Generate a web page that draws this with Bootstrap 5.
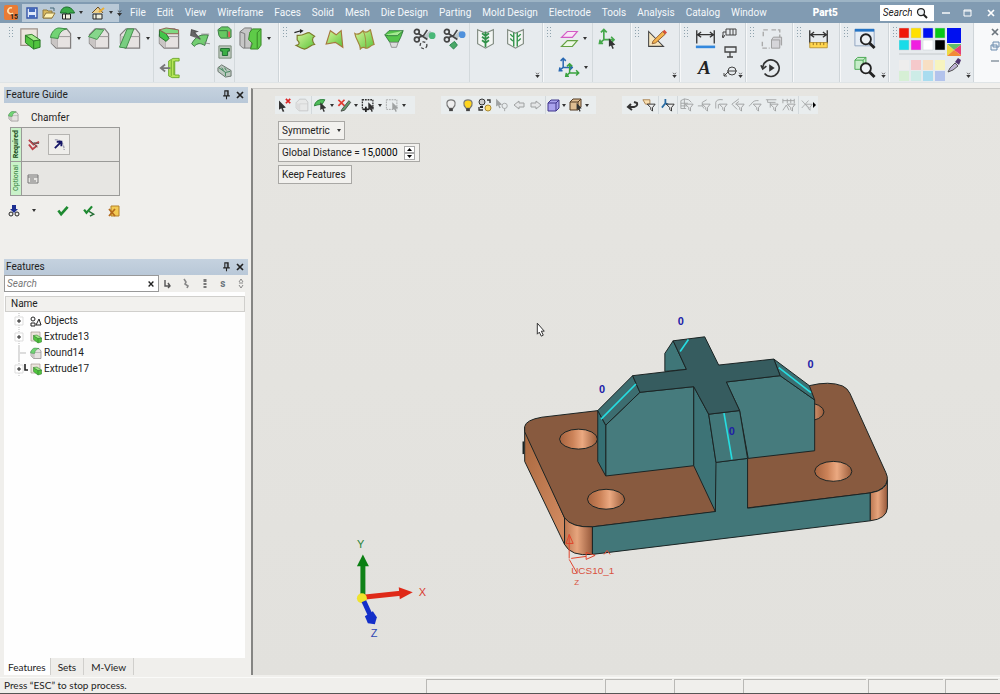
<!DOCTYPE html>
<html lang="en">
<head>
<meta charset="utf-8">
<meta name="viewport" content="width=device-width, initial-scale=1">
<title>Part5</title>
<link href="https://cdn.jsdelivr.net/npm/bootstrap@5.3.0/dist/css/bootstrap.min.css" rel="stylesheet">
<style>
body{font-family:Roboto,"Liberation Sans",sans-serif;font-size:10px;line-height:14px;color:#222;background:#f0efec}
svg{display:block;flex:none}
button,.form-control{font:inherit;color:inherit}
.tool{border:0;background:none;padding:0;display:flex;align-items:center;justify-content:center;flex:none}
.drop::after{content:"";border:2px solid transparent;border-top:3px solid #333;border-bottom:0;margin-left:4px}
.titlebar{background:#819bb2;height:23px;border-top:2px solid #9db4c5;color:#fff}
.logo{width:14px;height:15px}
.quick{background:#b9c9d7;height:18px;width:97px}
.menu{gap:11px;margin-left:11px}
.menu a{color:#f4f8fb;text-decoration:none;white-space:nowrap}
.doc{font-weight:900;margin-left:46px}
.find{width:54px;height:16px;margin-left:42px;color:#222}
.find input{width:32px;padding:0 0 0 3px;border:0;background:none;font-style:italic}
.find input::placeholder{color:#222;opacity:1}
.ribbon{background:#e7ebee;height:60px;padding-left:5px;border-bottom:1px solid #dfe4e6}
.bundle{border-right:1px solid #cfd5d9;box-shadow:1px 0 #f7f8f9;position:relative;padding-left:10px}
.bundle::before{content:"";position:absolute;left:3px;top:3px;width:6px;height:11px;background:radial-gradient(circle,#8fa3ae 1px,transparent 1px) 0 0/3px 3px}
.pile{width:30px;display:flex;flex-direction:column;flex:none}
.pile .tool{height:29px;margin-top:1px}
.pile .tool + .tool{margin-top:0}
.wide{width:39px}
.slim{width:19px}
.slim .tool,.slim .tool + .tool{height:19px;margin-top:0}
.rule{width:1px;background:#d3d9dc}
.more{position:absolute;right:2px;bottom:4px}
.g1{width:274px}.g2{width:264px}.g3{width:88px}.g4{width:49px}.g5{width:66px}.g6{width:47px}.g7{width:47px}.g8{width:49px}.g9{width:85px}
.side{width:244px;margin-left:4px;margin-right:3px}
.panel-title{background:linear-gradient(#c5d2df,#b9c8d8);height:16px;padding:0 3px 0 2px}
.guide{height:172px}
.steps{width:110px;margin:2px 0 0 6px;border-collapse:collapse}
.steps td,.steps th{border:1px solid #9a9a98;height:34px;padding:0}
.steps th{width:11px;background:#c9f2c9;font-size:7px;line-height:9px;font-weight:400;color:#2d7a35}
.steps tr:first-child th{font-weight:700;color:#174b17}
.steps th span{writing-mode:vertical-rl;transform:rotate(180deg);display:block;margin:auto}
.steps td{background:#e7e6e3}
.steps td .tool{width:22px;height:21px}
.on{border:1px solid #b5b4b1!important;background:#efeeeb!important}
.filter{width:155px;height:17px;border:1px solid #999;background:#fff}
.filter input{border:0;background:none;font-style:italic;padding:0 2px;width:138px}
.filter input::placeholder{color:#777;opacity:1}
.tree{background:#fefefe;margin-right:3px}
.head{background:#f2f1ee;border:1px solid #d0cfcc;height:16px;padding-left:5px;margin:4px 0 0 1px}
.tree li{height:16px;gap:2px;line-height:16px}
.tree ul{padding:1px 0 0 8px}
.expand{width:16px}
.tabs button{border:0;border-right:1px solid #d0cfcc;background:#eeedea;height:17px;padding:0 7px;white-space:nowrap}
.tabs .active{background:#fefefe;padding:0 4px}
.tabs,.status{font-family:Lato,sans-serif}
.view{background:linear-gradient(#e6e5e1,#e2e1dd);border-left:2px solid #858583;border-top:1px solid #c9c8c5;margin-top:1px}
.model{z-index:0}
.over{z-index:1}
.strip{background:#e9edee;height:18px;gap:1px;padding:0 2px}
.strip .tool{height:18px;min-width:16px}
.strip .drop::after{margin-left:2px;margin-right:2px}
.s1{width:140px;margin:7px 26px 0 22px}.s2{width:155px;margin:7px 26px 0 0}.s3{width:196px;margin-top:7px}
.faded{opacity:.4}
.opts{margin:7px 0 0 25px;gap:3px}
.opt{border:1px solid #a9a8a5;background:#f2f1ee;height:19px;padding:0 5px 0 3px;display:flex;align-items:center;white-space:nowrap}
.opt.drop{padding-right:3px}
.opt.drop::after{margin-left:7px}
.opt input{border:0;background:none;width:38px;padding:0;margin-left:2px}
.spin{border:1px solid #aaa;width:11px;height:7px;padding:0;background:#fff;display:flex;align-items:center;justify-content:center}
.status{height:17px;margin-top:2px;border-bottom:1px solid #555;border-top:1px solid #fafaf8}
.cellbar{border:1px solid #b9b8b5;border-width:1px 0 0 1px;margin-right:2px;margin-top:1px;flex:none}
.w1{width:177px}.w2{width:67px}.w3{width:123px}.w4{width:75px}.w5{width:53px}
.canvas-text{font-family:"Liberation Sans",sans-serif}
</style>
<script src="https://cdn.jsdelivr.net/npm/bootstrap@5.3.0/dist/js/bootstrap.bundle.min.js"></script>
</head>
<body class="vh-100 d-flex flex-column overflow-hidden">

<svg width="0" height="0" class="position-absolute" aria-hidden="true">
<defs>
<linearGradient id="gr" x1="0" y1="0" x2="1" y2="1"><stop offset="0" stop-color="#d6f59a"/><stop offset="1" stop-color="#5cc43c"/></linearGradient>
<linearGradient id="hole"><stop offset="0" stop-color="#a5633f"/><stop offset=".35" stop-color="#cc8359"/><stop offset=".6" stop-color="#eba981"/><stop offset="1" stop-color="#9a5c3a"/></linearGradient>
<linearGradient id="corner"><stop offset="0" stop-color="#bb7650"/><stop offset=".45" stop-color="#e7a57d"/><stop offset="1" stop-color="#96583a"/></linearGradient>
<linearGradient id="lside" x1="0" y1="0" x2="1" y2="1"><stop offset="0" stop-color="#a9683f"/><stop offset="1" stop-color="#d58d63"/></linearGradient>
<symbol id="cube" viewBox="0 0 24 24"><path d="M2 8 8 2h10l4 5v15H7l-5-5z" fill="#e6e2e1" stroke="#827f7f" stroke-width="1.3"/><path d="M8 10h14M8 10v12" fill="none" stroke="#9a9696"/><path d="m2 9 6 1v12l-6-5z" fill="#c9c5c4"/></symbol>
<symbol id="extrude" viewBox="0 0 24 24"><path d="M2 1h18v18H2z" fill="#ece5dd" stroke="#9d928a" stroke-width="1.3"/><path d="m7 8 9 6 7-1v8l-7 2-9-7z" fill="#51c43f" stroke="#267523"/><path d="m7 8 7-1 9 6-7 1z" fill="#a2ea88" stroke="#267523"/><path d="M16 14v9" stroke="#267523"/></symbol>
<symbol id="round" viewBox="0 0 24 24"><use href="#cube"/><path d="M1 11C2 5 6 1 10 1l8 1c-5 1-8 4-9 10z" fill="#72d475" stroke="#3d8f46"/></symbol>
<symbol id="cham" viewBox="0 0 24 24"><use href="#cube"/><path d="m1 10 8-8 8 1-7 10z" fill="#86d68b" stroke="#479651"/></symbol>
<symbol id="draft" viewBox="0 0 24 24"><use href="#cube"/><path d="M1 21 9 2h7L8 22z" fill="#78ce80" stroke="#3f8d48"/></symbol>
<symbol id="cut" viewBox="0 0 24 24"><use href="#cube"/><path d="m2 3 7 4 3 5-3 3-7-5z" fill="#42c54a" stroke="#24672a"/><path d="m2 3 7-2 13 2v4H9z" fill="#7ed980" stroke="#915f50"/></symbol>
<symbol id="push" viewBox="0 0 24 24"><path d="M3 18C8 9 14 7 22 8l-4 12c-5-3-8-3-12 1z" fill="#73ce72" stroke="#326f3b"/><path d="M14 7h9M17 17l7 1" stroke="#888"/><path d="m2 9 1-7 6 2-3 1 7 8" fill="#666" stroke="#555" stroke-width="1.5"/></symbol>
<symbol id="offset" viewBox="0 0 24 24"><path d="m11 4 5-3h7v3h-5v16h5v3h-8l-4-2z" fill="#b6e659" stroke="#65a527"/><path d="M17 4v16M14 3v18" stroke="#65a527"/><path d="M13 12H3m4-4-5 4 5 4" fill="none" stroke="#777" stroke-width="2"/></symbol>
<symbol id="boxg" viewBox="0 0 16 16"><path d="m1 5 4-3h7l3 3v8l-2 1H4l-2-3z" fill="#66c862" stroke="#3a7742"/><path d="M2 6h9v7" fill="none" stroke="#3a7742"/><path d="M13 7v6" stroke="#e25a5a" stroke-width="2"/></symbol>
<symbol id="pocket" viewBox="0 0 16 16"><path d="M1 1h14v14H1z" fill="#bcc9bc" stroke="#708270"/><path d="M3 4h10v3h-2v5H5V7H3z" fill="#3cae44" stroke="#17642c"/></symbol>
<symbol id="slab" viewBox="0 0 16 16"><path d="m1 5 4-3 10 6v6l-6 1-8-6z" fill="#bbc8bf" stroke="#647069"/><path d="m5 5 2 3m1-3 2 3M2 5l7 5 5-1M9 10v4" fill="none" stroke="#3a8255"/></symbol>
<symbol id="divide" viewBox="0 0 24 24"><path d="m1 5 5-4h7l-1 7 2 5-2 9H4l-3-3z" fill="#c6c6c6" stroke="#777"/><path d="m1 5 5 2v15" fill="none" stroke="#777"/><path d="M11 6 14 2h9v17l-3 4h-8l2-6-4-4 1-6z" fill="#5ecb48" stroke="#368527"/><path d="m19 6 4-4m-4 4v16" stroke="#368527"/></symbol>
<symbol id="sweepf" viewBox="0 0 24 24"><path d="M4 8c7 1 9-3 13-3l6 4c-3 2-3 5 0 9-4 0-6 4-11 5-5-1-7-3-9-4 4-1 4-3 1-6z" fill="url(#gr)" stroke="#7c7a2a" stroke-width="1.3"/><path d="m1 5 7-2" stroke="#222" stroke-width="1.4"/><path d="m7 1 4 2-4 3z" fill="#222"/></symbol>
<symbol id="planef" viewBox="0 0 24 24"><path d="m2 18 5-16 7 5 6-5 2 20-9-6z" fill="url(#gr)" stroke="#a5793e" stroke-width="1.4"/></symbol>
<symbol id="patch" viewBox="0 0 24 24"><path d="M2 6c3 2 6 0 9-3 3 4 6 0 8-1l4 16c-5 1-6 5-9 4-4-2-5 0-6 1C8 17 3 13 2 6z" fill="url(#gr)" stroke="#a2843c" stroke-width="1.3"/><path d="M11 3c3 6 3 12 3 19" fill="none" stroke="#a2843c"/></symbol>
<symbol id="skirt" viewBox="0 0 24 24"><path d="m1 7 5-5h17l-3 8-3 6H7z" fill="#55c54b" stroke="#287135"/><path d="m1 7 4 1h11l7-6" fill="#a4e991" stroke="#287135"/><path d="m7 16 2 6h6l2-6z" fill="#ddd" stroke="#888"/></symbol>
<symbol id="scis" viewBox="0 0 24 24"><path d="m13 11 6-6" stroke="#b9c4c8" stroke-width="4"/><g fill="none" stroke="#454545" stroke-width="1.8"><circle cx="4" cy="5" r="2.500"/><circle cx="4" cy="13" r="2.500"/><path d="m6 7 9 6M6 11l5-2 4-6"/></g></symbol>
<symbol id="trim" viewBox="0 0 24 24"><use href="#scis"/><circle cx="20" cy="9" r="3.500" fill="#4ab878"/><circle cx="11" cy="19" r="3.500" fill="none" stroke="#444" stroke-dasharray="3 2" stroke-width="1.400"/></symbol>
<symbol id="splitf" viewBox="0 0 24 24"><use href="#scis"/><circle cx="20" cy="8" r="3.500" fill="#4f91dc"/><path d="m7 19 5-4 3 4-4 4z" fill="#49a867" stroke="#24834a"/></symbol>
<symbol id="page" viewBox="0 0 24 24"><path d="m3 2 9 4 9-4v16l-9 5-9-5z" fill="#f3f6f3" stroke="#818b81" stroke-width="1.3"/></symbol>
<symbol id="mold1" viewBox="0 0 24 24"><use href="#page"/><path d="M12 4v18M8 6l4 3 4-3M8 10l4 3 4-3M8 14l4 3 4-3" fill="none" stroke="#32924a" stroke-width="2"/></symbol>
<symbol id="mold2" viewBox="0 0 24 24"><use href="#page"/><path d="M10 5v16M14 5v16M6 7l3 3m-3 2 3 3m9-8-3 3m3 2-3 3" fill="none" stroke="#32924a" stroke-width="1.600"/></symbol>
<symbol id="planes" viewBox="0 0 24 24"><path d="M10 3h12l-6 7H3z" fill="#fae5f7" stroke="#d35bc5" stroke-width="1.4"/><path d="M10 14h12l-6 7H3z" fill="#edf8e5" stroke="#64a143" stroke-width="1.4"/></symbol>
<symbol id="axes" viewBox="0 0 24 24"><path d="M8 16V2M4 6l4-4 4 4M8 16h14m-4-4 4 4-4 4M8 16l-6 5m1-5-1 5h5" fill="none" stroke="currentColor" stroke-width="2.300"/></symbol>
<symbol id="cur" viewBox="0 0 12 16"><path d="m1 1 9 9-4 1 2 4-2 1-2-5-3 2z" fill="#333"/></symbol>
<symbol id="sketch" viewBox="0 0 24 24"><path d="M3 4v17h17z" fill="#f6e5bd" stroke="#444" stroke-width="1.200"/><path d="M8 15 19 4l3 3L11 17l-4 1z" fill="#f4b44e" stroke="#8b562c"/><path d="m19 4 2-2 3 3-2 2z" fill="#d64f3c"/></symbol>
<symbol id="dim" viewBox="0 0 24 24"><path d="M2 2v15M22 2v15M3 7h18M7 4 3 7l4 3M17 4l4 3-4 3" fill="none" stroke="#333" stroke-width="1.500"/></symbol>
<symbol id="mag" viewBox="0 0 24 24"><circle cx="10" cy="10" r="7" fill="#eef2f5" stroke="currentColor" stroke-width="2.500"/><path d="m15 15 7 7" stroke="currentColor" stroke-width="4"/></symbol>
<symbol id="clock" viewBox="0 0 24 24"><path d="M3 11a9 9 0 1 1 2 7M1 9l2 4 4-3" fill="none" stroke="#333" stroke-width="1.800"/><path d="m10 8 6 4-6 4z" fill="#333"/></symbol>
<symbol id="ghost" viewBox="0 0 24 24"><path d="M3 9V2h5M12 2h9v9M2 15v7h8" fill="none" stroke="#aaa" stroke-width="1.500" stroke-dasharray="5 2"/><path d="M12 13h9v9h-9zM12 13l2-3h9v9" fill="#d5d5d9" stroke="#999"/></symbol>
<symbol id="pin" viewBox="0 0 10 12"><path d="M3 1h4v6H3zM1 7h8M5 7v4" fill="none" stroke="#222" stroke-width="1.300"/><path d="M6 1v6" stroke="#222"/></symbol>
<symbol id="x" viewBox="0 0 10 10"><path d="m2 2 6 6M8 2 2 8" stroke="currentColor" stroke-width="1.700"/></symbol>
<symbol id="check" viewBox="0 0 14 14"><path d="m2 7 3 4 7-8" fill="none" stroke="#1e8a31" stroke-width="2.800"/></symbol>
<symbol id="chev" viewBox="0 0 6 8"><path d="m1 1 2 2 2-2" fill="none" stroke="#333"/><path d="M0 4h6L3 8z" fill="#333"/></symbol>
<symbol id="plus" viewBox="0 0 16 16"><path d="M7 0v16" stroke="#bbb" stroke-dasharray="1 1"/><path d="M3 4h8v8H3z" fill="#fff" stroke="#ddd"/><path d="M5 8h4M7 6v4" stroke="#222"/></symbol>
<symbol id="funnel" viewBox="0 0 16 16"><path d="M6 7h9l-3 4v4l-2-2v-2z" fill="#eee" stroke="currentColor"/></symbol>
<symbol id="bulb" viewBox="0 0 14 16"><path d="M5 11C1 7 2 2 7 2s6 5 2 9z" stroke="#777" stroke-width="1.200"/><path d="M5 11h4v3H5z" fill="#444"/></symbol>
</defs>
</svg>

<header class="titlebar d-flex align-items-center flex-shrink-0 ps-1">
<svg class="logo" viewBox="0 0 14 15"><rect width="14" height="15" rx="2" fill="#e87b35"/><path d="M8 3a3 3 0 1 0 1 5" fill="none" stroke="#ffe0b0" stroke-width="1.600"/><text x="6" y="14" font-size="7" font-weight="700" fill="#222">15</text></svg>
<div class="quick d-flex align-items-center ms-1 px-1 gap-1">
<button class="tool" title="Save"><svg width="12" height="12" viewBox="0 0 12 12"><path d="M1 1h10v10H1z" fill="#dfe9fa" stroke="#3454a8" stroke-width="1.400"/><path d="M3 1h6v4H3zM3 8h6v3H3z" fill="#4469bd"/></svg></button>
<button class="tool" title="Open"><svg width="14" height="12" viewBox="0 0 14 12"><path d="M1 3h4l1 1h4v7H1z" fill="#d9b95e" stroke="#8f7840"/><path d="m1 11 3-5h9l-3 5z" fill="#fff2b3" stroke="#8f7840"/><path d="M8 1h4v3" fill="none" stroke="#467"/></svg></button>
<button class="tool drop" title="Import"><svg width="15" height="14" viewBox="0 0 14 14"><path d="M0 7c1-8 11-8 14 0H9v2H6V7z" fill="#3aaa48" stroke="#166b28"/><path d="M2 8h8v5H2zM5 8v5" fill="#eed" stroke="#222"/></svg></button>
<button class="tool drop ms-1" title="Export"><svg width="14" height="14" viewBox="0 0 14 14"><path d="m1 7 6-6 5 6" fill="#edd18d" stroke="#684b25"/><path d="M2 8h9v5H2zM5 8v5" fill="#eed" stroke="#222"/><path d="m8 6 5-4" stroke="#eaae36" stroke-width="2"/></svg></button>
<button class="tool" title="Customize"><svg width="5" height="8"><use href="#chev"/></svg></button>
</div>
<nav class="menu d-flex" aria-label="Main menu">
<a href="#">File</a><a href="#">Edit</a><a href="#">View</a><a href="#">Wireframe</a><a href="#">Faces</a><a href="#">Solid</a><a href="#">Mesh</a><a href="#">Die Design</a><a href="#">Parting</a><a href="#">Mold Design</a><a href="#">Electrode</a><a href="#">Tools</a><a href="#">Analysis</a><a href="#">Catalog</a><a href="#">Window</a>
</nav>
<div class="doc">Part5</div>
<label class="find bg-white d-flex align-items-center"><input type="text" placeholder="Search" aria-label="Search commands"><svg width="12" height="12" class="ms-1"><use href="#mag"/></svg></label>
<div class="d-flex justify-content-between flex-grow-1 ps-2 pe-1">
<button class="tool text-white" title="Minimize"><svg width="8" height="8"><path d="M0 4h8" stroke="#fff" stroke-width="1.400"/></svg></button>
<button class="tool text-white" title="Maximize"><svg width="9" height="8"><path d="M1 1h7v6H1zM1 2h7" fill="none" stroke="#fff"/></svg></button>
<button class="tool text-white" title="Close"><svg width="10" height="10"><use href="#x"/></svg></button>
</div>
</header>

<div class="ribbon d-flex flex-shrink-0" role="toolbar" aria-label="Features">
<div class="bundle g1 d-flex">
<div class="pile"><button class="tool" title="Extrude"><svg width="22" height="22"><use href="#extrude"/></svg></button></div>
<div class="pile wide"><button class="tool drop" title="Round"><svg width="24" height="23"><use href="#round"/></svg></button></div>
<div class="pile"><button class="tool" title="Chamfer"><svg width="24" height="23"><use href="#cham"/></svg></button></div>
<div class="pile wide"><button class="tool drop" title="Draft"><svg width="24" height="23"><use href="#draft"/></svg></button></div>
<div class="rule"></div>
<div class="pile"><button class="tool" title="Cut"><svg width="24" height="23"><use href="#cut"/></svg></button><button class="tool" title="Offset"><svg width="21" height="22"><use href="#offset"/></svg></button></div>
<div class="pile"><button class="tool" title="Push"><svg width="21" height="21"><use href="#push"/></svg></button></div>
<div class="rule"></div>
<div class="pile slim"><button class="tool" title="Box"><svg width="15" height="15"><use href="#boxg"/></svg></button><button class="tool" title="Pocket"><svg width="14" height="14"><use href="#pocket"/></svg></button><button class="tool" title="Slab"><svg width="15" height="15"><use href="#slab"/></svg></button></div>
<div class="rule"></div>
<div class="pile wide"><button class="tool drop" title="Divide"><svg width="25" height="23"><use href="#divide"/></svg></button></div>
</div>
<div class="bundle g2 d-flex">
<div class="pile"><button class="tool" title="Sweep face"><svg width="23" height="22"><use href="#sweepf"/></svg></button></div>
<div class="pile"><button class="tool" title="Plane face"><svg width="21" height="20"><use href="#planef"/></svg></button></div>
<div class="pile"><button class="tool" title="Patch"><svg width="22" height="22"><use href="#patch"/></svg></button></div>
<div class="pile"><button class="tool" title="Skirt"><svg width="20" height="20"><use href="#skirt"/></svg></button></div>
<div class="pile"><button class="tool" title="Trim"><svg width="23" height="23"><use href="#trim"/></svg></button></div>
<div class="pile"><button class="tool" title="Split"><svg width="23" height="23"><use href="#splitf"/></svg></button></div>
<div class="rule"></div>
<div class="pile"><button class="tool" title="Mold core"><svg width="21" height="21"><use href="#mold1"/></svg></button></div>
<div class="pile"><button class="tool" title="Mold split"><svg width="21" height="21"><use href="#mold2"/></svg></button></div>
<svg class="more" width="5" height="6"><use href="#chev"/></svg>
</div>
<div class="bundle g3 d-flex">
<div class="pile wide"><button class="tool drop" title="Planes"><svg width="20" height="20"><use href="#planes"/></svg></button><button class="tool drop" title="Coordinate systems"><svg width="22" height="22" viewBox="0 0 24 24"><g color="#2868b2"><use href="#axes" width="17" height="17"/></g><g color="#3ba33f"><use href="#axes" x="7" y="6" width="17" height="17"/></g></svg></button></div>
<div class="rule"></div>
<div class="pile"><button class="tool" title="Activate system"><svg width="21" height="23" viewBox="0 0 24 24"><g color="#46a84b"><use href="#axes" width="20" height="20"/></g><use href="#cur" x="11" y="11" width="11" height="13"/></svg></button></div>
</div>
<div class="bundle g4 d-flex"><div class="pile"><button class="tool" title="Sketch"><svg width="21" height="21"><use href="#sketch"/></svg></button></div><svg class="more" width="5" height="6"><use href="#chev"/></svg></div>
<div class="bundle g5 d-flex">
<div class="pile"><button class="tool" title="Dimension"><svg width="21" height="22" viewBox="0 0 24 24"><use href="#dim"/><path d="M1 21h22" stroke="#3388dd" stroke-width="3"/></svg></button><button class="tool" title="Text"><svg width="20" height="22"><text x="3" y="17" font-family="Liberation Serif" font-size="19" font-weight="700" font-style="italic" fill="#222">A</text></svg></button></div>
<div class="pile slim"><button class="tool" title="Label"><svg width="15" height="14" viewBox="0 0 15 14"><path d="M4 3h10v6H4zM8 3v6m3-6v6M4 6H1v5M0 9l1 3 2-3" fill="none" stroke="#444"/></svg></button><button class="tool" title="Datum"><svg width="14" height="14" viewBox="0 0 14 14"><path d="M2 2h11v5H2zM7 7v5M4 12h6" fill="none" stroke="#444" stroke-width="1.300"/></svg></button><button class="tool" title="Balloon"><svg width="14" height="14" viewBox="0 0 14 14"><circle cx="9" cy="7" r="4" fill="none" stroke="#444"/><path d="M4 7h10M5 8l-4 4m0-3v3h3" fill="none" stroke="#444"/></svg></button></div>
<svg class="more" width="5" height="6"><use href="#chev"/></svg>
</div>
<div class="bundle g6 d-flex"><div class="pile"><button class="tool" title="Rebuild"><svg width="23" height="22"><use href="#ghost"/></svg></button><button class="tool" title="History"><svg width="22" height="22"><use href="#clock"/></svg></button></div></div>
<div class="bundle g7 d-flex"><div class="pile"><button class="tool" title="Measure"><svg width="21" height="22" viewBox="0 0 24 24"><use href="#dim"/><path d="M2 16h20v6H2z" fill="#ffd64f" stroke="#b69132"/><path d="M6 16v3m4-3v3m4-3v3m4-3v3" stroke="#8b651c"/></svg></button></div></div>
<div class="bundle g8 d-flex"><div class="pile"><button class="tool" title="Zoom window"><svg width="22" height="23" viewBox="0 0 24 24"><path d="M1 2h21v18H1z" fill="#e6edf5" stroke="#8ba0bc"/><path d="M1 3h21" stroke="#2474c5" stroke-width="3"/><use href="#mag" x="5" y="5" width="19" height="19"/></svg></button><button class="tool" title="Zoom selection"><svg width="22" height="23" viewBox="0 0 24 24"><path d="m1 4 3-3h9v10l-3 3H1zM1 4h9v10m0-10 3-3" fill="#c6edca" stroke="#43a44b"/><use href="#mag" x="5" y="5" width="19" height="19"/></svg></button></div><svg class="more" width="5" height="6"><use href="#chev"/></svg></div>
<div class="bundle g9 d-flex">
<svg width="62" height="56" viewBox="0 0 62 56" role="img" aria-label="Colour palette" class="mt-1">
<g stroke="#c5ccd0" stroke-width=".5"><path d="M0 1h10v10H0z" fill="#f01808"/><path d="M12 1h10v10H12z" fill="#ffe000"/><path d="M24 1h10v10H24z" fill="#0010f0"/><path d="M36 1h10v10H36z" fill="#08c818"/><path d="M0 13h10v10H0z" fill="#18dce8"/><path d="M12 13h10v10H12z" fill="#f020e0"/><path d="M24 13h10v10H24z" fill="#fff"/><path d="M36 13h10v10H36z" fill="#000"/></g>
<path d="M48 1h15v15H48z" fill="#0010f0"/><path d="M0 27h46" stroke="#c4c9cb"/>
<path d="M0 33h10v10H0z" fill="#eeeded"/><path d="M12 33h10v10H12z" fill="#f5c9cb"/><path d="M24 33h10v10H24z" fill="#f8dfc3"/><path d="M36 33h10v10H36z" fill="#f7f4bf"/><path d="M0 44h10v10H0z" fill="#d6efd5"/><path d="M12 44h10v10H12z" fill="#cdece7"/><path d="M24 44h10v10H24z" fill="#a9dcef"/><path d="M36 44h10v10H36z" fill="#b3c3ec"/>
<path d="M48 17h15L55 23z" fill="#61bd68"/><path d="M63 17v12l-8-6z" fill="#e63f77"/><path d="M48 17v12l7-6z" fill="#edda41"/><path d="M48 29h15l-8-6z" fill="#f28a37"/><path d="m49 45 2-4 5-5 3 3-5 4z" fill="#bbb0d2" stroke="#555"/><path d="m56 35 3-4 3 2-2 5z" fill="#513671"/></svg>
<svg class="more" width="5" height="6"><use href="#chev"/></svg>
</div>
<div class="d-flex flex-column align-items-center flex-grow-1 bg-light gap-1 ps-3 pt-1">
<button class="tool text-secondary" title="Close part"><svg width="10" height="10"><use href="#x"/></svg></button>
<button class="tool" title="Restore part"><svg width="10" height="10"><path d="M3 1h6v5H3zM1 4h6v5H1z" fill="#eef3f8" stroke="#6c8cad"/></svg></button>
<button class="tool" title="Minimize part"><svg width="9" height="10"><path d="M0 6h8" stroke="#567"/></svg></button>
</div>
</div>

<main class="d-flex flex-grow-1 pt-1 overflow-hidden">
<aside class="side d-flex flex-column flex-shrink-0">
<section class="guide flex-shrink-0">
<div class="panel-title d-flex align-items-center"><span class="flex-grow-1">Feature Guide</span><button class="tool me-1" title="Pin"><svg width="9" height="10"><use href="#pin"/></svg></button><button class="tool" title="Close"><svg width="10" height="10"><use href="#x"/></svg></button></div>
<div class="d-flex align-items-center gap-2 ms-1 mt-1"><svg width="11" height="11"><use href="#round"/></svg><span class="ms-1 pt-1">Chamfer</span></div>
<table class="steps">
<tr><th scope="row"><span>Required</span></th><td><div class="d-flex ps-1"><button class="tool pe-2" title="Edges"><svg width="13" height="13" viewBox="0 0 14 14"><path d="m2 2 5 5 6-3M2 7l4 5 5-4" fill="none" stroke="#bb4248" stroke-width="2"/><path d="m4 3 7 7M7 5l6 1" stroke="#555"/></svg></button><button class="tool on" title="Curve"><svg width="13" height="13" viewBox="0 0 14 14"><path d="M2 2c6-1 10 4 10 11" fill="none" stroke="#99a" stroke-width="1.300" stroke-dasharray="3 1"/><path d="m2 11 6-6M4 4h5v5" fill="none" stroke="#151567" stroke-width="2"/></svg></button></div></td></tr>
<tr><th scope="row"><span>Optional</span></th><td><div class="d-flex ps-1"><button class="tool pe-2" title="Settings"><svg width="12" height="10"><path d="M1 1h10v8H1zM1 3h10M3 5h4M3 7h6" fill="none" stroke="#777"/></svg></button></div></td></tr>
</table>
<div class="d-flex align-items-center mt-2 ms-1">
<button class="tool" title="Preview"><svg width="12" height="13" viewBox="0 0 12 13"><path d="M4 1h4v4h2L6 9 2 5h2z" fill="#1c2e91"/><circle cx="3" cy="10" r="2" fill="none" stroke="#222"/><circle cx="9" cy="10" r="2" fill="none" stroke="#222"/></svg></button>
<button class="tool drop me-3 ms-2" title="Preview options"></button>
<button class="tool ms-1 me-2" title="OK"><svg width="14" height="13"><use href="#check"/></svg></button>
<button class="tool ms-1 me-2" title="Apply"><svg width="14" height="13" viewBox="0 0 14 14"><use href="#check" width="12" height="12"/><path d="m7 8 5 3-4 2" fill="none" stroke="#236e34" stroke-width="1.500"/></svg></button>
<button class="tool ms-1" title="Cancel"><svg width="12" height="12"><path d="M3 1h8v10H3z" fill="#f3cb55" stroke="#b4812b"/><path d="m1 4 6 7M7 4l-6 7" stroke="#b56b1d" stroke-width="1.800"/></svg></button>
</div>
</section>
<section class="flex-grow-1 d-flex flex-column">
<div class="panel-title d-flex align-items-center flex-shrink-0"><span class="flex-grow-1">Features</span><button class="tool me-1" title="Pin"><svg width="9" height="10"><use href="#pin"/></svg></button><button class="tool" title="Close"><svg width="10" height="10"><use href="#x"/></svg></button></div>
<div class="d-flex align-items-center">
<label class="filter d-flex align-items-center"><input type="text" placeholder="Search" aria-label="Search features"><svg width="8" height="8" class="ms-1"><use href="#x"/></svg></label>
<div class="d-flex justify-content-between flex-grow-1 ps-1 pe-1 text-secondary">
<button class="tool" title="Child"><svg width="8" height="10"><path d="M2 1v6h5M5 4l2 3-2 2" fill="none" stroke="#555" stroke-width="1.400"/></svg></button>
<button class="tool" title="Chain"><svg width="7" height="11"><path d="m1 1 2 3-1 2 3 2-1 2" fill="none" stroke="#888" stroke-width="1.600"/></svg></button>
<button class="tool" title="Problems"><svg width="5" height="11"><path d="M2 1v6m0 1v2" stroke="#777" stroke-width="3" stroke-dasharray="3 1"/></svg></button>
<button class="tool fw-bold" title="Suppressed">s</button>
<button class="tool" title="Sort"><svg width="6" height="11"><path d="M1 4 3 1l2 3M1 7l2 3 2-3M1 5h4" fill="none" stroke="#888"/></svg></button>
</div></div>
<div class="tree flex-grow-1">
<div class="head">Name</div>
<ul class="list-unstyled m-0">
<li class="d-flex align-items-center"><svg class="expand" height="16"><use href="#plus"/></svg><svg width="12" height="11"><g fill="none" stroke="#222"><circle cx="3" cy="3" r="2"/><path d="M1 7h4v3H1zM6 9l3-6 2 6z"/></g></svg>Objects</li>
<li class="d-flex align-items-center"><svg class="expand" height="16"><use href="#plus"/></svg><svg width="12" height="13"><use href="#extrude"/></svg>Extrude13</li>
<li class="d-flex align-items-center"><svg class="expand" height="16"><path d="M7 0v16M8 8h6" stroke="#bbb"/></svg><svg width="12" height="13"><use href="#round"/></svg>Round14</li>
<li class="d-flex align-items-center"><svg class="expand" height="16"><use href="#plus"/><path d="M13 3v6h3" fill="none" stroke="#222" stroke-width="1.600"/></svg><svg width="12" height="13"><use href="#extrude"/></svg>Extrude17</li>
</ul>
</div>
<div class="tabs d-flex flex-shrink-0"><button class="active">Features</button><button>Sets</button><button>M-View</button></div>
</section>
</aside>

<section class="view flex-grow-1 position-relative d-flex flex-column align-items-start">
<svg class="model position-absolute top-0 start-0 w-100 h-100" viewBox="253 88 747 588" role="img" aria-label="Ribbed base plate">
<g transform="translate(510 310) scale(.3333)" stroke="#1b2424" stroke-width="3" stroke-linejoin="round">
<path d="M43 352V455L163 705V625z" fill="url(#lside)"/>
<path d="M39 395v38" stroke-width="5"/>
<path d="M43 366V350Q47 330 95 322L265 302 900 227Q960 212 1000 228 1015 235 1022 250L1130 488Q1144 515 1120 535 1110 545 1083 550L247 652Q185 655 163 625z" fill="#885a3f"/>
<path d="M163 625V705Q182 742 247 735V652Q185 655 163 625z" fill="url(#corner)"/>
<path d="M1083 550Q1135 542 1135 510V595Q1133 628 1083 634z" fill="url(#corner)"/>
<g fill="url(#hole)"><ellipse cx="205" cy="388" rx="57" ry="30"/><ellipse cx="288" cy="569" rx="56" ry="30"/><ellipse cx="972" cy="485" rx="56" ry="30"/><ellipse cx="890" cy="306" rx="54" ry="28"/></g>
<path d="M247 652 617 606V458L714 446V596L1083 550V634L247 735z" fill="#427779"/>
<path d="m465 184V130l25-38 40 86z" fill="#3f7678"/>
<path d="m650 216 162-19 104 73v153L716 446 690 302z" fill="#467b7d"/>
<path d="m793 147 19 50 104 73-16-43z" fill="#3b7073"/>
<path d="m390 247 162-17v238L287 499V346z" fill="#467b7d"/>
<path d="m263 302 24 44v153l-24-44z" fill="#356f73"/>
<path d="m368 197 22 50-103 99-24-44z" fill="#3c6d70"/>
<path d="m552 230 45 83 22 145-2 148-65-138z" fill="#3d7376"/>
<path d="m597 313 93-11 24 144-95 12z" fill="#427779"/>
<path d="m490 92 95-12 42 85 166-18 19 50-162 19 40 86-93 11-45-83-162 17-22-50 162-19z" fill="#365c5f"/>
<path d="M273 328 378 222M643 310l24 139M808 173l97 75M536 88l-25 36" stroke="#26dce0" stroke-width="5"/>
</g>
<g class="canvas-text" font-size="11" font-weight="700" fill="#2020a8"><text x="678" y="325">0</text><text x="599" y="393">0</text><text x="808" y="368">0</text><text x="729" y="435">0</text></g>
<g fill="none" stroke="#e0452c"><path d="M569 559V535m-3 9 3-9 4 9zM571 559l15-2v-4l9 3-9 4v-3M604 555l3-4 3 4M569 560l8 14"/></g>
<g class="canvas-text" fill="#d9513d" font-size="10"><text x="571" y="575">UCS10_1</text><text x="574" y="586" font-size="8">Z</text></g>
<g stroke-width="5"><path d="M362 598v-33" stroke="#108218"/><path d="m356 567 6-12 6 12z" fill="#0a7f13"/><path d="m362 598 38-4" stroke="#df2918"/><path d="m398 588 14 5-13 7z" fill="#df2918"/><circle cx="361" cy="599" r="5" fill="#efe32d"/><path d="m363 602 6 13" stroke="#142fc9"/><path d="m364 617 8-5 4 6-2 7-7-1z" fill="#142fc9"/></g>
<g class="canvas-text" font-size="11"><text x="356" y="549" fill="#29833a">Y</text><text x="418" y="597" fill="#d83a30">X</text><text x="370" y="638" fill="#3047b3">Z</text></g>
<path d="m537 323v11l2-2 2 4 2-1-2-4h3z" fill="#fff" stroke="#333"/>
</svg>
<div class="over d-flex">
<div class="strip s1 d-flex">
<button class="tool" title="Clear selection"><svg width="14" height="14" viewBox="0 0 16 16"><use href="#cur" y="2" width="11" height="14"/><path d="m9 1 5 5m0-5L9 6" stroke="#db2525" stroke-width="2"/></svg></button>
<button class="tool faded" title="Solid"><svg width="14" height="14"><use href="#cube"/></svg></button>
<div class="rule"></div>
<button class="tool drop" title="Pick"><svg width="15" height="14" viewBox="0 0 16 16"><path d="M1 9c1-6 6-8 12-7l-3 5-6 1z" fill="#4fbd5a" stroke="#267a36"/><use href="#cur" x="7" y="4" width="9" height="12"/></svg></button>
<button class="tool drop" title="Filter"><svg width="15" height="14" viewBox="0 0 16 16"><path d="m1 2 7 7m0-7L1 9" stroke="#e23a30" stroke-width="2"/><path d="m5 13 8-10 2 2-7 9-4 1z" fill="#639c68" stroke="#444"/></svg></button>
<button class="tool drop" title="Window pick"><svg width="15" height="14" viewBox="0 0 16 16"><path d="M1 2h12v11H1z" fill="none" stroke="#333" stroke-width="1.500" stroke-dasharray="2 1"/><use href="#cur" x="7" y="4" width="9" height="12"/><path d="M2 13h6m-3-3v6" stroke="#222" stroke-width="2"/></svg></button>
<button class="tool drop" title="Window options"><svg class="faded" width="15" height="14" viewBox="0 0 16 16"><path d="M1 2h12v11H1z" fill="none" stroke="#333" stroke-dasharray="2 1"/><use href="#cur" x="7" y="4" width="9" height="12"/></svg></button>
</div>
<div class="strip s2 d-flex">
<button class="tool" title="Hide"><svg width="14" height="15" fill="#eee"><use href="#bulb"/></svg></button>
<button class="tool" title="Show"><svg width="14" height="15" fill="#ffd51e"><use href="#bulb"/></svg></button>
<button class="tool" title="Swap visibility"><svg width="14" height="14"><circle cx="4" cy="4" r="3" fill="#ccc" stroke="#333"/><circle cx="10" cy="10" r="3" fill="#ffdc66" stroke="#aa8a33"/><path d="M9 2h3v3M1 9v3h4" fill="none" stroke="#333" stroke-width="1.300"/><path d="M2 9h3" stroke="#222" stroke-width="2"/></svg></button>
<button class="tool faded" title="Pick visibility"><svg width="14" height="14" viewBox="0 0 16 16"><use href="#cur" width="10" height="12"/><circle cx="11" cy="9" r="3" fill="none" stroke="#333"/><path d="M11 12v3" stroke="#333"/></svg></button>
<button class="tool faded" title="Previous"><svg width="12" height="12"><path d="m1 6 5-4v2h5v4H6v2z" fill="#ddd" stroke="#333"/></svg></button>
<button class="tool faded" title="Next"><svg width="12" height="12"><path d="m11 6-5-4v2H1v4h5v2z" fill="#ddd" stroke="#333"/></svg></button>
<div class="rule"></div>
<button class="tool drop" title="Shading"><svg width="13" height="13"><path d="m1 4 3-3h8v8l-3 3H1zM1 4h8v8m0-8 3-3" fill="#aaa2ee" stroke="#40368c"/></svg></button>
<button class="tool drop" title="View orientation"><svg width="14" height="14" viewBox="0 0 14 14"><path d="m1 4 3-3h8v8l-3 3H1zM1 4h8v8m0-8 3-3" fill="#dfbd91" stroke="#553c24"/><use href="#cur" x="7" y="4" width="7" height="10"/></svg></button>
</div>
<div class="strip s3 d-flex justify-content-between">
<button class="tool" title="Back"><svg width="13" height="12"><path d="M3 8h5q4-1 3-4L8 3M5 5 2 8l4 3" fill="none" stroke="#333" stroke-width="2"/></svg></button>
<button class="tool" title="Any"><svg width="14" height="14" viewBox="0 0 16 16"><path d="M1 2h8v5H4z" fill="#f9dfb0" stroke="#a57c49"/><use href="#funnel"/></svg></button>
<div class="rule"></div>
<button class="tool" title="Points"><svg width="14" height="14" viewBox="0 0 16 16"><path d="M5 1v5l-4 5m4-5 6 3" fill="none" stroke="#286ba3" stroke-width="2"/><use href="#funnel"/></svg></button>
<div class="rule"></div>
<button class="tool faded" title="Faces"><svg width="14" height="14" viewBox="0 0 16 16"><path d="m1 3 4-2 5 1 3 3M1 3v9h6M1 6h8M1 9h7M5 1v11" fill="none" stroke="#333"/><use href="#funnel"/></svg></button>
<button class="tool faded" title="Edges"><svg width="14" height="14" viewBox="0 0 16 16"><path d="M1 9h5V5l5-3M6 9l2 3" fill="none" stroke="#333"/><use href="#funnel"/></svg></button>
<button class="tool faded" title="Loops"><svg width="14" height="14" viewBox="0 0 16 16"><path d="M2 12V5q1-4 8-3M5 12V7" fill="none" stroke="#333"/><use href="#funnel"/></svg></button>
<button class="tool faded" title="Curves"><svg width="14" height="14" viewBox="0 0 16 16"><path d="M9 1 1 7l6 6M9 4 5 7" fill="none" stroke="#333"/><use href="#funnel"/></svg></button>
<button class="tool faded" title="Surfaces"><svg width="14" height="14" viewBox="0 0 16 16"><path d="M1 9c3 0 3-7 11-6" fill="none" stroke="#333"/><use href="#funnel"/></svg></button>
<button class="tool faded" title="Planes"><svg width="14" height="14" viewBox="0 0 16 16"><path d="M1 2h12M3 2v3h9M6 5v6" fill="none" stroke="#333"/><use href="#funnel"/></svg></button>
<button class="tool faded" title="Dimensions"><svg width="14" height="14" viewBox="0 0 16 16"><path d="M1 1v5m5-5v5m4-5v5m4-5v5M1 3h13M1 14l4-6 3 6" fill="none" stroke="#333"/><use href="#funnel"/></svg></button>
<div class="rule"></div>
<button class="tool" title="More filters"><svg class="faded" width="12" height="14" viewBox="0 0 16 16"><path d="m1 2 9 10M10 2 1 12" stroke="#333"/><use href="#funnel"/></svg><svg width="3" height="6"><path d="m0 0 3 3-3 3z"/></svg></button>
</div>
</div>
<div class="opts over d-flex flex-column align-items-start">
<button class="opt drop">Symmetric</button>
<div class="opt pe-1"><label for="dist">Global Distance =</label><input id="dist" type="text" value="15,0000"><div class="d-flex flex-column ms-1"><button class="spin" title="Increase"><svg width="5" height="3" viewBox="0 0 10 6"><path d="m0 6 5-6 5 6z"/></svg></button><button class="spin" title="Decrease"><svg width="5" height="3" viewBox="0 0 10 6"><path d="m0 0 5 6 5-6z"/></svg></button></div></div>
<button class="opt">Keep Features</button>
</div>
</section>
</main>

<footer class="status d-flex flex-shrink-0">
<div class="flex-grow-1 ps-1">Press “ESC” to stop process.</div>
<div class="cellbar w1"></div><div class="cellbar w2"></div><div class="cellbar w2"></div><div class="cellbar w3"></div><div class="cellbar w4"></div><div class="cellbar w5"></div>
</footer>
</body>
</html>
